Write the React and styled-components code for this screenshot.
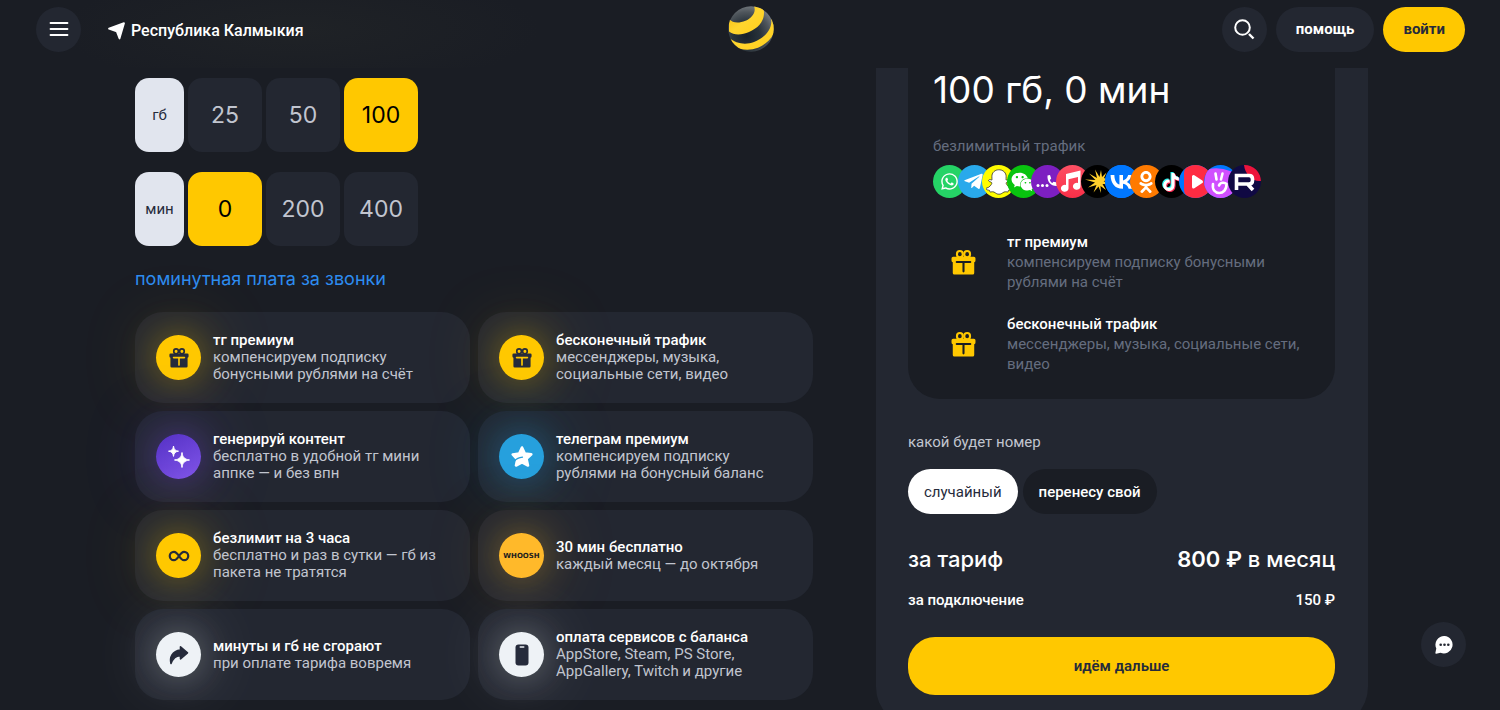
import React, { useState } from "react";
import styled, { createGlobalStyle, ThemeProvider } from "styled-components";
import { FaWhatsapp, FaTelegramPlane, FaSnapchatGhost, FaWeixin, FaOdnoklassniki, FaTiktok } from "react-icons/fa";
import { SiVk } from "react-icons/si";

const theme = {
  bg: "#1a1d24",
  soft: "#232731",
  yellow: "#ffc800",
  text: "#ffffff",
  textSoft: "#c1c5cf",
  textMuted: "#656d7f",
  dark: "#262b3b",
  link: "#2d8cf0",
  display: 'Inter, "Noto Sans", sans-serif',
};

const GlobalStyle = createGlobalStyle`
  * {
    box-sizing: border-box;
  }
  body {
    margin: 0;
    background-color: ${theme.bg};
    color: ${theme.text};
    font-family: Roboto, "Noto Sans", sans-serif;
    font-size: 15px;
    line-height: 20px;
  }
  button {
    font: inherit;
    color: inherit;
    border: none;
    padding: 0;
    cursor: pointer;
  }
  a {
    color: inherit;
    text-decoration: none;
  }
  svg {
    display: block;
    flex-shrink: 0;
  }
`;

/* header */

const Header = styled.header`
  position: sticky;
  top: 0;
  z-index: 2;
  display: grid;
  grid-template-columns: 1fr auto 1fr;
  align-items: center;
  padding: 6px 35px 16px 36px;
  background: radial-gradient(240px 60px at 300px 30px, #1f2226, transparent) ${({ theme }) => theme.bg};
`;

const HeaderSide = styled.div`
  display: flex;
  align-items: center;
  justify-content: ${({ $end }) => ($end ? "flex-end" : "flex-start")};
  gap: ${({ $end }) => ($end ? "9px" : "27px")};
`;

const RoundButton = styled.button`
  display: flex;
  align-items: center;
  justify-content: center;
  width: 45px;
  height: 45px;
  border-radius: 50%;
  background-color: ${({ theme }) => theme.soft};
`;

const ChatButton = styled(RoundButton)`
  position: fixed;
  right: 34px;
  bottom: 43px;
`;

const Region = styled.a`
  display: flex;
  align-items: center;
  gap: 6px;
  padding-top: 3px;
  font-size: 16px;
  font-weight: 500;
`;

const HeaderButton = styled.button`
  height: 45px;
  padding: 0 20px;
  border-radius: 23px;
  font-weight: 700;
  background-color: ${({ $primary, theme }) => ($primary ? theme.yellow : theme.soft)};
  color: ${({ $primary, theme }) => ($primary ? theme.dark : theme.text)};
`;

/* layout */

const Main = styled.main`
  display: grid;
  grid-template-columns: minmax(0, 1fr) 492px;
  align-items: start;
  gap: 63px;
  padding: 0 132px 0 135px;
`;

const Settings = styled.section`
  display: flex;
  flex-direction: column;
  padding-top: 10px;
`;

const OptionRow = styled.fieldset`
  display: flex;
  gap: 4px;
  margin: 0 0 20px;
  padding: 0;
  border: none;
`;

const Unit = styled.span`
  display: flex;
  align-items: center;
  justify-content: center;
  width: 49px;
  height: 74px;
  border-radius: 14px;
  background-color: #e1e5ee;
  color: ${({ theme }) => theme.dark};
`;

const HiddenRadio = styled.input`
  position: absolute;
  opacity: 0;
`;

const Tile = styled.label`
  display: flex;
  align-items: center;
  justify-content: center;
  width: 74px;
  height: 74px;
  border-radius: 14px;
  font-family: ${({ theme }) => theme.display};
  font-size: 23px;
  cursor: pointer;
  background-color: ${({ $active, theme }) => ($active ? theme.yellow : theme.soft)};
  color: ${({ $active, theme }) => ($active ? "#000" : theme.textSoft)};
`;

const PayLink = styled.a`
  align-self: flex-start;
  margin: 3px 0 23px;
  font-family: ${({ theme }) => theme.display};
  font-size: 18px;
  color: ${({ theme }) => theme.link};
`;

const Perks = styled.ul`
  display: grid;
  grid-template-columns: 1fr 1fr;
  gap: 8px;
  margin: 0;
  padding: 0;
  list-style: none;
`;

const Perk = styled.li`
  display: flex;
  align-items: center;
  gap: 12px;
  min-height: 91px;
  padding: 0 21px;
  border-radius: 28px;
  background-color: ${({ theme }) => theme.soft};
`;

const PerkIcon = styled.span`
  display: flex;
  align-items: center;
  justify-content: center;
  flex-shrink: 0;
  width: 45px;
  height: 45px;
  border-radius: 50%;
  color: ${({ theme }) => theme.dark};
  background: ${({ $bg }) => $bg};
  box-shadow: 0 0 36px ${({ $glow }) => $glow}, 0 0 72px ${({ $glow }) => $glow};
`;

const PerkText = styled.div`
  line-height: 17px;
  color: ${({ theme }) => theme.textSoft};
`;

const PerkTitle = styled.div`
  font-weight: 500;
  color: ${({ theme }) => theme.text};
`;

const Whoosh = styled.span`
  font: bold 7px "DejaVu Sans", sans-serif;
  color: #1d1d1f;
`;

/* order card */

const Order = styled.section`
  padding: 0 33px 32px 32px;
  border-radius: 0 0 40px 40px;
  background-color: ${({ theme }) => theme.soft};
`;

const Summary = styled.div`
  padding: 0 25px 25px;
  border-radius: 0 0 32px 32px;
  background-color: ${({ theme }) => theme.bg};
`;

const Volume = styled.h2`
  margin: 0 0 24px;
  font-family: ${({ theme }) => theme.display};
  font-size: 37px;
  font-weight: 400;
  line-height: 44px;
`;

const Caption = styled.div`
  color: ${({ theme }) => theme.textMuted};
`;

const Services = styled.ul`
  display: grid;
  grid-template-columns: repeat(13, minmax(0, 1fr));
  width: 320px;
  margin: 9px 0 34px;
  padding: 0;
  list-style: none;
`;

const Service = styled.li`
  display: flex;
  align-items: center;
  justify-content: center;
  width: 33px;
  height: 33px;
  border-radius: 50%;
  overflow: hidden;
  background: ${({ $bg }) => $bg};
`;

const VkMark = styled(SiVk)`
  color: #07f;
  background: linear-gradient(#fff, #fff) center / 80% 60% no-repeat;
`;

const Included = styled.div`
  display: grid;
  grid-template-columns: 60px 1fr;
  align-items: center;
  justify-items: start;
  column-gap: 14px;
  margin-top: 22px;
  color: ${({ theme }) => theme.textMuted};

  & > svg {
    justify-self: center;
    color: ${({ theme }) => theme.yellow};
  }
`;

const NumberTitle = styled.div`
  margin: 33px 0 17px;
  color: ${({ theme }) => theme.textSoft};
`;

const Pills = styled.div`
  display: flex;
  gap: 5px;
`;

const Pill = styled.label`
  display: flex;
  align-items: center;
  height: 45px;
  padding: 0 16px;
  border-radius: 23px;
  font-weight: ${({ $active }) => ($active ? 400 : 500)};
  cursor: pointer;
  background-color: ${({ $active, theme }) => ($active ? "#fff" : theme.bg)};
  color: ${({ $active, theme }) => ($active ? theme.dark : theme.text)};
`;

const Price = styled.div`
  display: flex;
  justify-content: space-between;
  margin-top: 17px;
  font-weight: 500;
`;

const TotalPrice = styled(Price)`
  margin-top: 31px;
  font-family: ${({ theme }) => theme.display};
  font-size: 22px;
  line-height: 28px;

  b {
    font-weight: 600;
  }
`;

const NextButton = styled.button`
  width: 100%;
  height: 58px;
  margin-top: 27px;
  border-radius: 27px;
  font-weight: 600;
  background-color: ${({ theme }) => theme.yellow};
  color: ${({ theme }) => theme.dark};
`;

/* icons */

const Gift = ({ size, line }) => (
  <svg width={size} height={size} viewBox="0 0 24 24" fill="none">
    <path d="M2 6.500h20a1.500 1.500 0 0 1 1.500 1.500V10a2 2 0 0 1-1.200 1.800V22a1.500 1.500 0 0 1-1.500 1.500H3.200A1.500 1.500 0 0 1 1.700 22V11.800A2 2 0 0 1 .5 10V8A1.500 1.500 0 0 1 2 6.500Z" fill="currentColor" />
    <ellipse cx="8.500" cy="4" rx="2.800" ry="3" fill={line} stroke="currentColor" strokeWidth="2" />
    <ellipse cx="15.500" cy="4" rx="2.800" ry="3" fill={line} stroke="currentColor" strokeWidth="2" />
    <path d="M5.500 11.500H18.500M12 12V20.500" stroke={line} strokeWidth="2" strokeLinecap="round" />
  </svg>
);

const Sparkles = () => (
  <svg width="24" height="24" viewBox="0 0 24 24" fill="#fff">
    <path d="M15 7.500C15.800 12.600 17.200 14.100 22.500 15C17.200 15.900 15.800 17.400 15 22.500C14.200 17.400 12.800 15.900 7.500 15C12.800 14.100 14.200 12.600 15 7.500Z" stroke="#fff" />
    <path d="M6.500 1C7 4.600 8 5.600 11.500 6.200C8 6.800 7 7.800 6.500 11.400C6 7.800 5 6.800 1.500 6.200C5 5.600 6 4.600 6.500 1Z" stroke="#fff" />
  </svg>
);

const Star = () => (
  <svg width="24" height="24" viewBox="0 0 24 24" fill="none">
    <path d="M12 2.500L14.800 8.600L21.300 9.300L16.500 13.800L18 20.500L12 17.300L6 20.500L7.200 14.500L2.700 9.500L9.200 8.600Z" fill="#fff" stroke="#fff" strokeWidth="2.600" strokeLinejoin="round" />
    <path d="M4.500 16C6.500 13.600 9 12.600 12.500 12.200" stroke="#26a0dd" strokeWidth="1.200" strokeLinecap="round" />
  </svg>
);

const Infinity8 = () => (
  <svg width="22" height="22" viewBox="0 0 24 24" fill="none" stroke="currentColor" strokeWidth="2.400">
    <path d="M12 12C10.400 9.500 8.800 7.400 6.500 7.400A4.600 4.600 0 0 0 6.500 16.600C8.800 16.600 10.400 14.500 12 12C13.600 9.500 15.200 7.400 17.500 7.400A4.600 4.600 0 0 1 17.500 16.600C15.200 16.600 13.600 14.500 12 12Z" />
  </svg>
);

const Forward = () => (
  <svg width="24" height="24" viewBox="0 0 24 24" fill="currentColor" stroke="currentColor" strokeLinejoin="round" strokeLinecap="round">
    <path d="M13.500 3.800L20.500 9.800L13.500 15.800V12.800C8.500 12.500 6 15.500 4 20.500C2.500 14.500 5 8 13.500 7Z" strokeWidth="1.600" />
  </svg>
);

const Phone = () => (
  <svg width="24" height="24" viewBox="0 0 24 24">
    <rect x="5.500" y="1.500" width="13" height="21" rx="3" fill="currentColor" />
    <rect x="9.500" y="3.200" width="5" height="1.600" rx=".8" fill="#eef2f6" />
  </svg>
);

const BallLogo = () => (
  <svg width="46" height="46" viewBox="0 0 46 46">
    <defs>
      <clipPath id="ball"><circle cx="23" cy="23" r="22.700" /></clipPath>
      <radialGradient id="ballDark" cx=".4" cy=".65" r=".65">
        <stop offset="0" stopColor="#17212a" />
        <stop offset=".45" stopColor="#28323a" />
        <stop offset=".8" stopColor="#4f565c" />
        <stop offset="1" stopColor="#70767b" />
      </radialGradient>
      <linearGradient id="ballYellow" x1="0" y1="0" x2="1" y2="1">
        <stop offset="0" stopColor="#f2b90c" />
        <stop offset=".5" stopColor="#ffd52e" />
        <stop offset="1" stopColor="#ffcf1a" />
      </linearGradient>
    </defs>
    <g clipPath="url(#ball)">
      <rect width="46" height="46" fill="url(#ballDark)" />
      <path d="M26 0C28.500 6 24 12 17.500 14.800C11 17.300 5 17.500 1 13V25.500C6 29.500 14 29 21 26C31 22 38 14 35.500 2Z" fill="url(#ballYellow)" />
      <path d="M0 31C9 38.500 18 39 26 36C38 31 45 22 43 12L48 22C45 32 38 38.500 30 41.800C22 44.800 13 44.500 5 40Z" fill="url(#ballYellow)" />
    </g>
  </svg>
);

const services = [
  { name: "WhatsApp", bg: "#25d366", icon: <FaWhatsapp size={19} /> },
  {
    name: "Telegram",
    bg: "#29a9eb",
    icon: (
      <svg width="33" height="33" viewBox="0 0 33 33">
        <FaTelegramPlane x={5} y={6} size={21} color="#fff" />
      </svg>
    ),
  },
  { name: "Snapchat", bg: "#fffc00", icon: <FaSnapchatGhost size={26} stroke="#333" strokeWidth={16} /> },
  { name: "WeChat", bg: "#09c40f", icon: <FaWeixin size={24} /> },
  {
    name: "Звонки",
    bg: "#7d1fc1",
    icon: (
      <svg width="33" height="33" viewBox="0 0 33 33">
        <circle cx="7" cy="20.500" r="1.500" fill="#fff" />
        <circle cx="11.500" cy="20.500" r="1.500" fill="#fff" />
        <circle cx="16" cy="20.500" r="1.500" fill="#fff" />
        <path d="M16.500 10.500C16 17 20 21.500 26.500 21L26 17.500L22.500 16.800L21.300 18C20 17.200 19.300 16.200 18.900 14.900L20.200 13.500L19 10Z" fill="#fff" />
      </svg>
    ),
  },
  {
    name: "Музыка",
    bg: "linear-gradient(#fc5064, #fa2f48)",
    icon: (
      <svg width="33" height="33" viewBox="0 0 33 33" fill="#fff">
        <path d="M10 9L24.500 5.500V21.500A3.800 3.500 0 1 1 22 18V12L12.500 14.200V23.500A3.800 3.500 0 1 1 10 20Z" />
      </svg>
    ),
  },
  {
    name: "Яндекс Музыка",
    bg: "#000",
    icon: (
      <svg width="33" height="33" viewBox="0 0 33 33" fill="#ffd02c">
        <path d="M28 15L22.500 16L28.500 19.500L21.500 19L25 25L19.500 21L20 28L17.500 21.500L12.500 27.500L15.500 20L7 22.500L14 17.500L4 14.500L14.500 15L8 8.500L16 13L14 4.500L18.500 12L20 5L21 12L25.500 7.500L23 13Z" />
      </svg>
    ),
  },
  { name: "ВКонтакте", bg: "#07f", icon: <VkMark size={33} /> },
  { name: "Одноклассники", bg: "#ff7a00", icon: <FaOdnoklassniki size={22} /> },
  {
    name: "TikTok",
    bg: "#000",
    icon: (
      <svg width="33" height="33" viewBox="0 0 33 33">
        <FaTiktok x={6} y={7} size={18} color="#25f4ee" />
        <FaTiktok x={8} y={9} size={18} color="#fe2c55" />
        <FaTiktok x={7} y={8} size={18} color="#fff" />
      </svg>
    ),
  },
  {
    name: "VK Видео",
    bg: "#07f",
    icon: (
      <svg width="33" height="33" viewBox="0 0 33 33">
        <rect x="5" y="-1" width="30" height="35" rx="9" fill="#ff2b42" />
        <path d="M14.500 11.500V22L22.500 16.800Z" fill="#fff" stroke="#fff" strokeWidth="3" strokeLinejoin="round" />
      </svg>
    ),
  },
  {
    name: "VK Клипы",
    bg: "#07f",
    icon: (
      <svg width="33" height="33" viewBox="0 0 33 33" fill="none" stroke="#fff" strokeLinecap="round">
        <path d="M5 4Q16 2 26 6Q32 8 31 14L28 34H-1Q0 14 2 8Q3 5 5 4Z" fill="#d04fff" stroke="none" />
        <path d="M11.500 8.500L12.500 14.500M18.500 8.500L17 14.500" strokeWidth="2.600" />
        <path d="M9 19C7 31 23 31 22.500 19C20.500 17 16 17.300 15 20.500" strokeWidth="2.600" />
      </svg>
    ),
  },
  {
    name: "Rutube",
    bg: "#100943",
    icon: (
      <svg width="33" height="33" viewBox="0 0 33 33" fill="none">
        <path d="M16 0H33V16C24 17 17 9 16 0Z" fill="#ed143b" />
        <path d="M8.500 25V10.500H21Q24.500 10.500 24.500 14V15.500Q24.500 19 21 19H9M19.500 19L25 25" stroke="#fff" strokeWidth="3.600" />
      </svg>
    ),
  },
];

const perks = [
  { title: "тг премиум", text: ["компенсируем подписку", "бонусными рублями на счёт"], bg: theme.yellow, glow: "rgba(255, 200, 0, .34)", icon: "gift" },
  { title: "бесконечный трафик", text: ["мессенджеры, музыка,", "социальные сети, видео"], bg: theme.yellow, glow: "rgba(255, 200, 0, .34)", icon: "gift" },
  { title: "генерируй контент", text: ["бесплатно в удобной тг мини", "аппке — и без впн"], bg: "linear-gradient(150deg, #5430c4, #8156ea)", glow: "rgba(124, 80, 230, .4)", icon: "sparkles" },
  { title: "телеграм премиум", text: ["компенсируем подписку", "рублями на бонусный баланс"], bg: "#26a0dd", glow: "rgba(38, 160, 221, .4)", icon: "star" },
  { title: "безлимит на 3 часа", text: ["бесплатно и раз в сутки — гб из", "пакета не тратятся"], bg: theme.yellow, glow: "rgba(255, 200, 0, .34)", icon: "infinity" },
  { title: "30 мин бесплатно", text: ["каждый месяц — до октября"], bg: "#ffb92a", glow: "rgba(255, 185, 42, .34)", icon: "whoosh" },
  { title: "минуты и гб не сгорают", text: ["при оплате тарифа вовремя"], bg: "#eef2f6", glow: "rgba(238, 242, 246, .3)", icon: "forward" },
  { title: "оплата сервисов с баланса", text: ["AppStore, Steam, PS Store,", "AppGallery, Twitch и другие"], bg: "#eef2f6", glow: "rgba(238, 242, 246, .3)", icon: "phone" },
];

const perkIcons = {
  gift: <Gift size={20} line={theme.yellow} />,
  sparkles: <Sparkles />,
  star: <Star />,
  infinity: <Infinity8 />,
  whoosh: <Whoosh>WHOOSH</Whoosh>,
  forward: <Forward />,
  phone: <Phone />,
};

const Options = ({ unit, name, values, value, onChange }) => (
  <OptionRow aria-label={unit}>
    <Unit>{unit}</Unit>
    {values.map((v) => (
      <Tile key={v} $active={v === value}>
        <HiddenRadio type="radio" name={name} checked={v === value} onChange={() => onChange(v)} />
        {v}
      </Tile>
    ))}
  </OptionRow>
);

const App = () => {
  const [gb, setGb] = useState(100)
  const [min, setMin] = useState(0)
  const [number, setNumber] = useState("случайный")

  return (
    <ThemeProvider theme={theme}>
      <GlobalStyle />
      <Header>
        <HeaderSide>
          <RoundButton aria-label="меню">
            <svg width="20" height="20" viewBox="0 0 20 20" stroke="#fff" strokeWidth="1.800" strokeLinecap="round">
              <path d="M1.500 4H18.500M1.500 10H18.500M1.500 16H18.500" />
            </svg>
          </RoundButton>
          <Region href="#region">
            <svg width="17" height="18" viewBox="0 0 17 18" fill="#fff" stroke="#fff" strokeLinejoin="round">
              <path d="M1 6.700L16 1.200L11.500 16.500L8.800 9.500Z" strokeWidth="1.800" />
            </svg>
            Республика Калмыкия
          </Region>
        </HeaderSide>
        <a href="#home" aria-label="билайн"><BallLogo /></a>
        <HeaderSide $end>
          <RoundButton aria-label="поиск">
            <svg width="22" height="22" viewBox="0 0 22 22" fill="none" stroke="#fff" strokeWidth="2">
              <circle cx="9.500" cy="9.500" r="7.300" />
              <path d="M16 16L20.500 20.500" strokeWidth="2.400" />
            </svg>
          </RoundButton>
          <HeaderButton>помощь</HeaderButton>
          <HeaderButton $primary>войти</HeaderButton>
        </HeaderSide>
      </Header>

      <Main>
        <Settings>
          <Options unit="гб" name="gb" values={[25, 50, 100]} value={gb} onChange={setGb} />
          <Options unit="мин" name="min" values={[0, 200, 400]} value={min} onChange={setMin} />
          <PayLink href="#calls">поминутная плата за звонки</PayLink>
          <Perks>
            {perks.map((p) => (
              <Perk key={p.title}>
                <PerkIcon $bg={p.bg} $glow={p.glow}>{perkIcons[p.icon]}</PerkIcon>
                <PerkText>
                  <PerkTitle>{p.title}</PerkTitle>
                  {p.text.map((line) => <div key={line}>{line}</div>)}
                </PerkText>
              </Perk>
            ))}
          </Perks>
        </Settings>

        <Order>
          <Summary>
            <Volume>{gb} гб, {min} мин</Volume>
            <Caption>безлимитный трафик</Caption>
            <Services>
              {services.map((s) => (
                <Service key={s.name} $bg={s.bg} aria-label={s.name}>{s.icon}</Service>
              ))}
            </Services>
            <Included>
              <Gift size={25} line={theme.bg} />
              <div>
                <PerkTitle>тг премиум</PerkTitle>
                компенсируем подписку бонусными рублями на счёт
              </div>
            </Included>
            <Included>
              <Gift size={25} line={theme.bg} />
              <div>
                <PerkTitle>бесконечный трафик</PerkTitle>
                мессенджеры, музыка, социальные сети, видео
              </div>
            </Included>
          </Summary>

          <NumberTitle>какой будет номер</NumberTitle>
          <Pills>
            {["случайный", "перенесу свой"].map((n) => (
              <Pill key={n} $active={n === number}>
                <HiddenRadio type="radio" name="number" checked={n === number} onChange={() => setNumber(n)} />
                {n}
              </Pill>
            ))}
          </Pills>
          <TotalPrice>
            <span>за тариф</span>
            <span><b>800 ₽</b> в месяц</span>
          </TotalPrice>
          <Price>
            <span>за подключение</span>
            <span>150 ₽</span>
          </Price>
          <NextButton>идём дальше</NextButton>
        </Order>
      </Main>

      <ChatButton aria-label="чат">
        <svg width="20" height="20" viewBox="0 0 20 20" fill="#fff">
          <path d="M10.500 1A8.700 8.700 0 1 1 6.500 17.700L2.200 18.700Q1.200 18.800 1.400 17.800L2.300 13.500A8.700 8.700 0 0 1 10.500 1Z" />
          <g fill="#232731">
            <circle cx="6.700" cy="9.800" r="1.300" />
            <circle cx="10.500" cy="9.800" r="1.300" />
            <circle cx="14.300" cy="9.800" r="1.300" />
          </g>
        </svg>
      </ChatButton>
    </ThemeProvider>
  );
};

export default App;
